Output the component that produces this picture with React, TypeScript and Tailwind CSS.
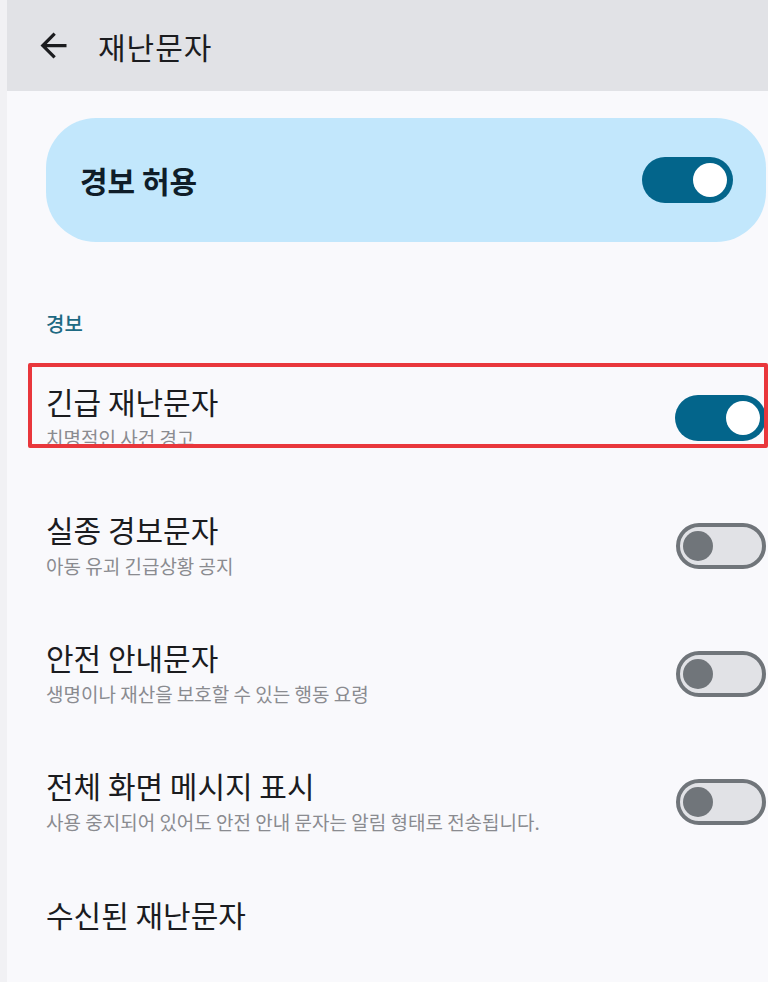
import React from "react";

type Alert = {
  title: string;
  subtitle: string;
  on: boolean;
  highlight?: boolean;
};

const alerts: Alert[] = [
  { title: "긴급 재난문자", subtitle: "치명적인 사건 경고", on: true, highlight: true },
  { title: "실종 경보문자", subtitle: "아동 유괴 긴급상황 공지", on: false },
  { title: "안전 안내문자", subtitle: "생명이나 재산을 보호할 수 있는 행동 요령", on: false },
  {
    title: "전체 화면 메시지 표시",
    subtitle: "사용 중지되어 있어도 안전 안내 문자는 알림 형태로 전송됩니다.",
    on: false,
  },
];

function Toggle({ on }: { on: boolean }) {
  if (on) {
    return (
      <div className="flex h-[46px] w-[91px] shrink-0 items-center justify-end rounded-full bg-[#03658b] pr-[6px]">
        <div className="h-[34px] w-[34px] rounded-full bg-white" />
      </div>
    );
  }
  return (
    <div className="flex h-[46px] w-[90px] shrink-0 items-center rounded-full border-[4px] border-[#70757a] bg-[#e1e2e6] pl-[3px]">
      <div className="h-[30px] w-[30px] rounded-full bg-[#70757a]" />
    </div>
  );
}

function AlertRow({ item }: { item: Alert }) {
  return (
    <div className="relative flex h-[128px] items-center justify-between">
      <div className="flex flex-col">
        <div className="text-[30px] leading-[36px] text-[#1b1c1f]">{item.title}</div>
        <div className="mt-[4px] text-[19px] leading-[30px] text-[#8a8b90]">{item.subtitle}</div>
      </div>
      <Toggle on={item.on} />
      {item.highlight && (
        <div className="pointer-events-none absolute top-[9px] left-[-18px] right-[-2px] h-[85px] rounded-[2px] border-[4px] border-[#e9373c]" />
      )}
    </div>
  );
}

export default function App() {
  return (
    <div className="flex h-[982px] w-[768px] overflow-hidden bg-[#f9f9fc] font-['Noto_Sans_CJK_KR','Noto_Sans',sans-serif]">
      <div className="w-[7px] shrink-0 bg-[#f1f1f4]" />
      <div className="flex flex-1 flex-col">
        <header className="flex h-[91px] items-center gap-[25px] bg-[#e1e2e6] pl-[27px]">
          <svg width="39" height="39" viewBox="0 0 24 24" fill="#1b1c1f">
            <path d="M20 11H7.83l5.59-5.59L12 4l-8 8 8 8 1.41-1.41L7.83 13H20v-2z" />
          </svg>
          <h1 className="text-[30px] leading-none tracking-[1px] text-[#1b1c1f]">재난문자</h1>
        </header>

        <main className="flex flex-col pl-[39px] pr-[2px]">
          <div className="mt-[27px] flex h-[124px] items-center justify-between rounded-[50px] bg-[#c2e7fc] pl-[34px] pr-[33px]">
            <span className="text-[30px] font-bold leading-none text-[#0f1d29]">경보 허용</span>
            <Toggle on />
          </div>

          <div className="mt-[68px] text-[20px] font-medium leading-[28px] text-[#1e6a83]">경보</div>

          <div className="mt-[16px] flex flex-col">
            {alerts.map((a) => (
              <AlertRow key={a.title} item={a} />
            ))}
            <div className="pt-[30px] text-[30px] leading-[36px] text-[#1b1c1f]">수신된 재난문자</div>
          </div>
        </main>
      </div>
    </div>
  );
}
